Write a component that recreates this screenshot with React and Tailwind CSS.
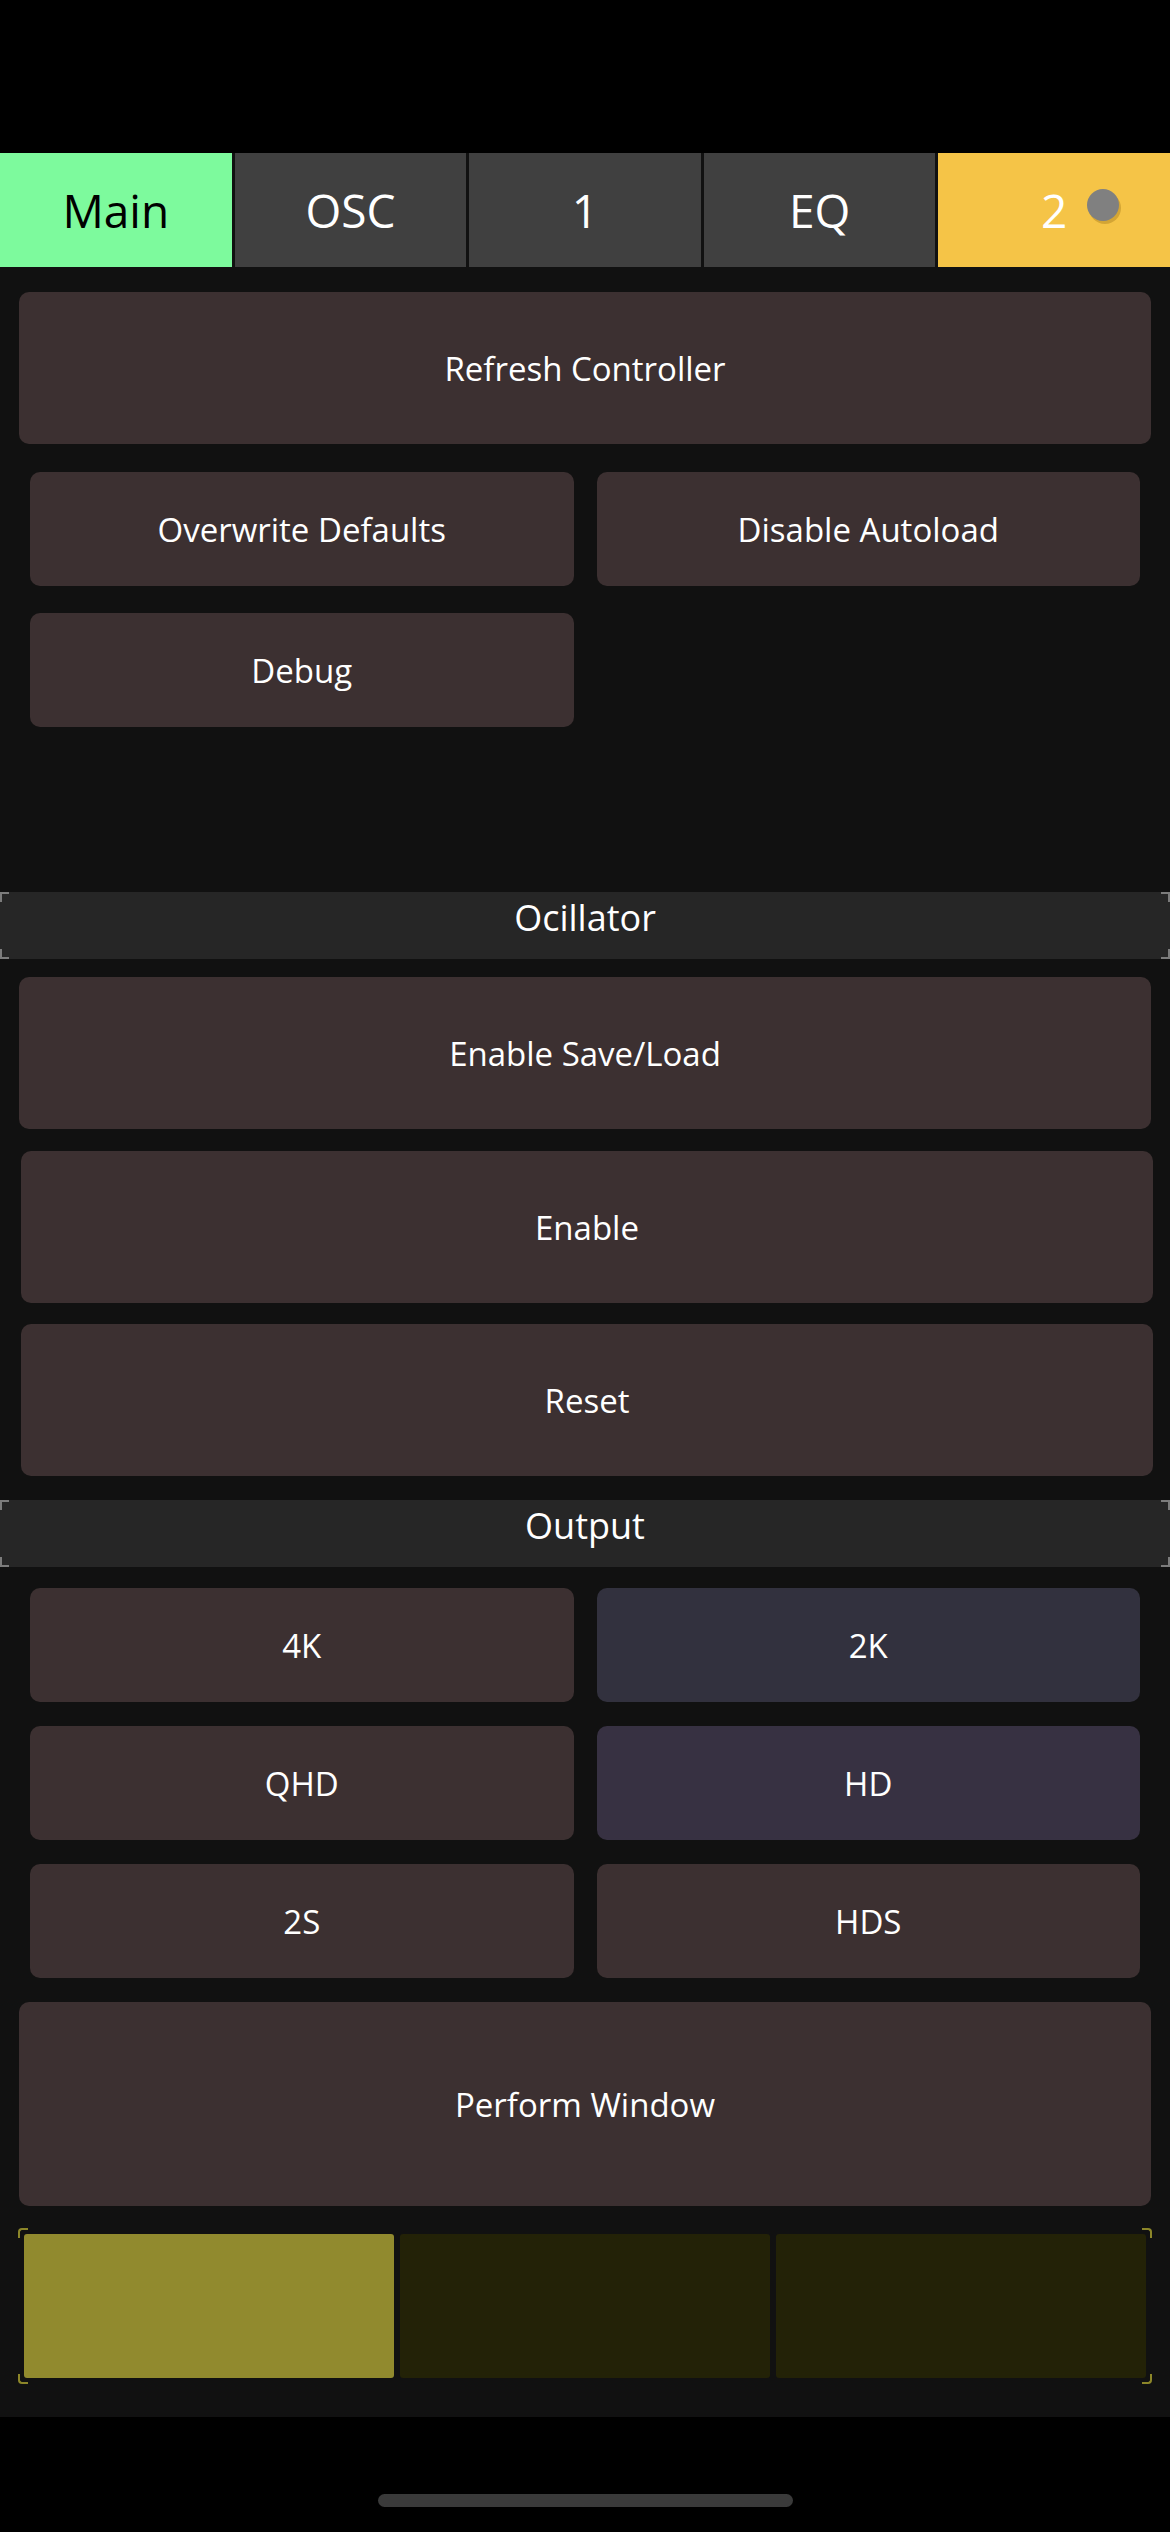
import React from "react";

const FONT = { fontFamily: '"Open Sans", "Noto Sans", sans-serif' };

function Btn({ label, className = "", bg = "bg-[#3c3031]" }) {
  return (
    <div
      className={`${bg} rounded-[10px] flex items-center justify-center text-white text-[33px] leading-none ${className}`}
    >
      {label}
    </div>
  );
}

function GreyCorners() {
  return (
    <>
      <span className="absolute left-0 top-0 w-[9px] h-[10px] border-l-2 border-t-2 border-[#7c7c7c]" />
      <span className="absolute right-0 top-0 w-[9px] h-[10px] border-r-2 border-t-2 border-[#7c7c7c]" />
      <span className="absolute left-0 bottom-0 w-[9px] h-[10px] border-l-2 border-b-2 border-[#7c7c7c]" />
      <span className="absolute right-0 bottom-0 w-[9px] h-[10px] border-r-2 border-b-2 border-[#7c7c7c]" />
    </>
  );
}

function Header({ label, className = "" }) {
  return (
    <div
      className={`relative h-[67px] bg-[#262626] flex items-center justify-center pb-[15px] text-white text-[36px] leading-none ${className}`}
    >
      <GreyCorners />
      {label}
    </div>
  );
}

export default function App() {
  return (
    <div className="w-[1170px] h-[2532px] bg-black flex flex-col" style={FONT}>
      <div className="h-[153px] shrink-0" />
      <div className="bg-[#111111] flex flex-col pb-[33px]">
        {/* Tabs */}
        <div className="grid grid-cols-5 gap-x-[3px] h-[114px]">
          <div className="bg-[#7dfa9d] flex items-center justify-center text-black text-[46px] leading-none">
            Main
          </div>
          <div className="bg-[#404040] flex items-center justify-center text-white text-[46px] leading-none">
            OSC
          </div>
          <div className="bg-[#404040] flex items-center justify-center text-white text-[46px] leading-none">
            1
          </div>
          <div className="bg-[#404040] flex items-center justify-center text-white text-[46px] leading-none">
            EQ
          </div>
          <div className="relative bg-[#f5c447] flex items-center justify-center text-white text-[46px] leading-none">
            2
            <span className="absolute left-[149px] top-[36px] w-[32px] h-[32px] rounded-full bg-[#808080] shadow-[2px_3px_0_rgba(150,110,20,0.35)]" />
          </div>
        </div>

        <Btn label="Refresh Controller" className="mt-[25px] mx-[19px] h-[152px]" />

        <div className="mt-[28px] mx-[30px] grid grid-cols-2 gap-x-[23px] gap-y-[27px]">
          <Btn label="Overwrite Defaults" className="h-[114px]" />
          <Btn label="Disable Autoload" className="h-[114px]" />
          <Btn label="Debug" className="h-[114px]" />
        </div>

        <Header label="Ocillator" className="mt-[165px]" />

        <Btn label="Enable Save/Load" className="mt-[18px] mx-[19px] h-[152px]" />
        <Btn label="Enable" className="mt-[22px] ml-[21px] mr-[17px] h-[152px]" />
        <Btn label="Reset" className="mt-[21px] ml-[21px] mr-[17px] h-[152px]" />

        <Header label="Output" className="mt-[24px]" />

        <div className="mt-[21px] mx-[30px] grid grid-cols-2 gap-x-[23px] gap-y-[24px]">
          <Btn label="4K" className="h-[114px]" />
          <Btn label="2K" bg="bg-[#32313e]" className="h-[114px]" />
          <Btn label="QHD" className="h-[114px]" />
          <Btn label="HD" bg="bg-[#373142]" className="h-[114px]" />
          <Btn label="2S" className="h-[114px]" />
          <Btn label="HDS" className="h-[114px]" />
        </div>

        <Btn label="Perform Window" className="mt-[24px] mx-[19px] h-[204px]" />

        <div className="relative mt-[22px] mx-[18px] h-[156px] p-[6px]">
          <span className="absolute left-0 top-0 w-[10px] h-[10px] border-l-2 border-t-2 rounded-tl-[4px] border-[#8c8629]" />
          <span className="absolute right-0 top-0 w-[10px] h-[10px] border-r-2 border-t-2 rounded-tr-[4px] border-[#8c8629]" />
          <span className="absolute left-0 bottom-0 w-[10px] h-[10px] border-l-2 border-b-2 rounded-bl-[4px] border-[#8c8629]" />
          <span className="absolute right-0 bottom-0 w-[10px] h-[10px] border-r-2 border-b-2 rounded-br-[4px] border-[#8c8629]" />
          <div className="grid grid-cols-3 gap-x-[6px] h-full">
            <div className="bg-[#918a2e] rounded-[3px]" />
            <div className="bg-[#232207] rounded-[3px]" />
            <div className="bg-[#232207] rounded-[3px]" />
          </div>
        </div>
      </div>
      <div className="flex-1 flex items-start justify-center pt-[77px]">
        <div className="w-[415px] h-[13px] rounded-full bg-[#3a3a3a]" />
      </div>
    </div>
  );
}
